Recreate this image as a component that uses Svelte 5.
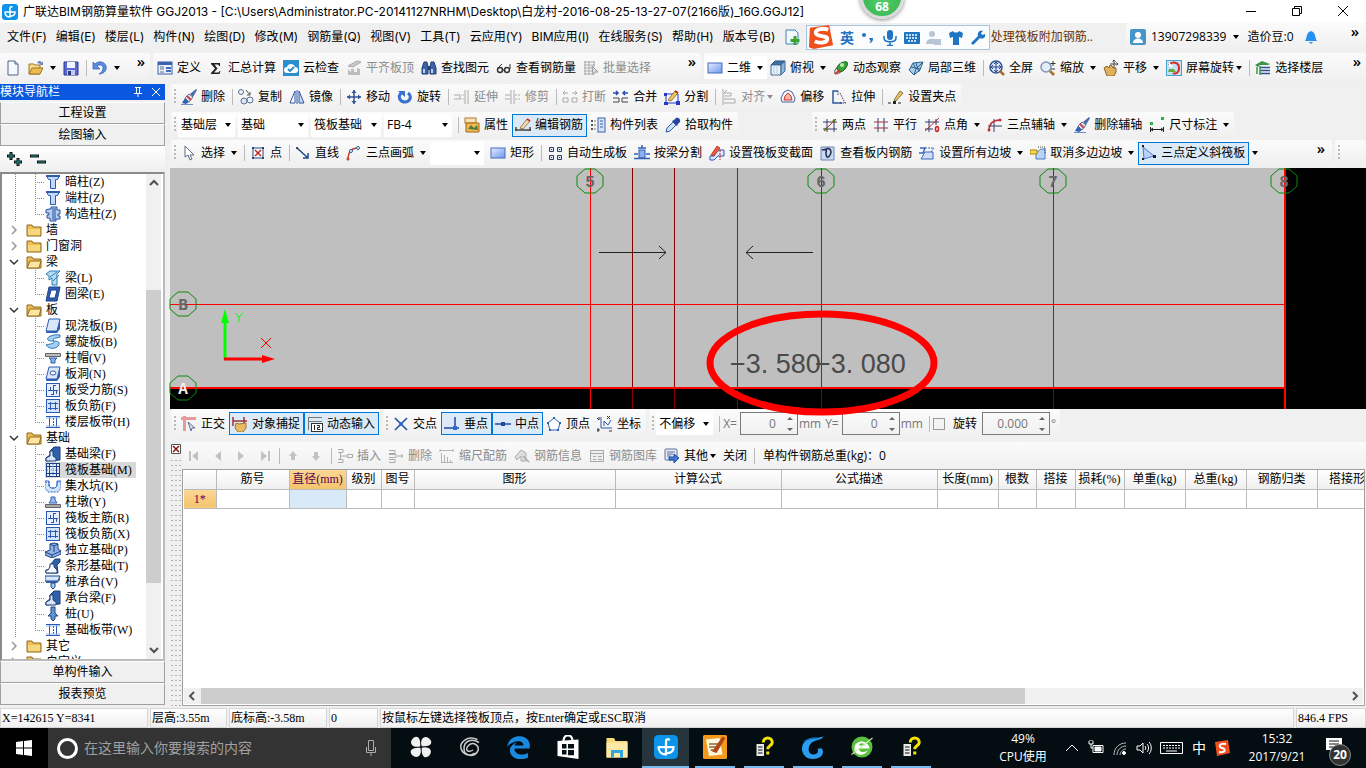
<!--
  GGJ2013 main window: menus, toolbars, component tree, drawing, rebar table
-->

<script>
  const menus = ['文件(F)', '编辑(E)', '楼层(L)', '构件(N)', '绘图(D)', '修改(M)', '钢筋量(Q)', '视图(V)', '工具(T)', '云应用(Y)', 'BIM应用(I)', '在线服务(S)', '帮助(H)', '版本号(B)'];

  const sep = { type: 'sep' };
  const grip = { type: 'grip' };
  const more = { type: 'more' };
  const b = (icon, label = '', opts = {}) => ({ type: 'btn', icon, label, ...opts });
  const combo = (value, width, name) => ({ type: 'combo', value, width, name });
  const off = { off: true };
  const on = { on: true };
  const drop = { drop: true };

  const fileBar = [b('doc', '', { title: '新建' }), b('open', '', { title: '打开', drop: true }), b('save', '', { title: '保存' }), sep, b('undo', '', { title: '撤销', drop: true }), more];
  const defBar = [b('form', '定义'), b('sigma', '汇总计算'), b('cloud', '云检查'), b('slab', '平齐板顶', off), b('find', '查找图元'), b('glasses', '查看钢筋量'), b('batch', '批量选择', off), more];
  const viewBar = [
    b('rect', '二维', { drop: true, white: true }), b('cube', '俯视', drop), b('orbit', '动态观察'), b('local3d', '局部三维'), sep,
    b('full', '全屏'), b('zoom', '缩放', drop), b('pan', '平移', drop), b('screen', '屏幕旋转', { small: true }), sep, b('floors', '选择楼层'), more
  ];

  const editBar = [
    grip, b('brush', '删除'), sep, b('copy', '复制'), b('mirror', '镜像'), sep, b('move', '移动'), b('rotate', '旋转'), sep,
    b('extend', '延伸', off), b('trim', '修剪', off), sep, b('cut', '打断', off), b('join', '合并'), b('split', '分割'), sep,
    b('align', '对齐', { off: true, small: true }), b('offset', '偏移'), b('stretch', '拉伸'), sep, b('gripset', '设置夹点')
  ];
  const partBar = [
    grip, combo('基础层', 57, '楼层'), combo('基础', 70, '构件类型'), combo('筏板基础', 70, '构件'), combo('FB-4', 68, '名称'), sep,
    b('props', '属性'), b('editbar', '编辑钢筋', on), b('list', '构件列表'), b('pick', '拾取构件')
  ];
  const axisBar = [
    grip, b('two', '两点'), b('parallel', '平行'), b('angle', '点角', drop), b('arcaxis', '三点辅轴', drop), b('brush', '删除辅轴'), b('dim', '尺寸标注', drop)
  ];
  const drawBar = [
    grip, b('arrow', '选择', drop), sep, b('point', '点'), sep, b('line', '直线'), b('arc', '三点画弧', drop), combo('', 54, '画弧方式'), b('rect', '矩形'), sep,
    b('auto', '自动生成板'), b('beamcut', '按梁分割'), b('section', '设置筏板变截面'), b('viewbar', '查看板内钢筋'), b('slope', '设置所有边坡', drop),
    b('unslope', '取消多边边坡', drop), b('tri', '三点定义斜筏板', { on: true }), { type: 'drop' }, more
  ];

  const snapBar1 = [grip, b('ortho', '正交'), b('osnap', '对象捕捉', on), b('dyn', '动态输入', on)];
  const snapBar2 = [grip, b('cross', '交点'), b('perp', '垂点', on), b('mid', '中点', on), b('vertex', '顶点'), b('coord', '坐标')];
  const rebarBar = [
    b('first', '', { off: true, title: '首行' }), b('prev', '', { off: true, title: '上一行' }), b('next', '', { off: true, title: '下一行' }), b('last', '', { off: true, title: '末行' }), sep,
    b('up', '', { off: true, title: '上移' }), b('down', '', { off: true, title: '下移' }), sep,
    b('insert', '插入', off), b('remove', '删除', off), b('scale', '缩尺配筋', off), b('info', '钢筋信息', off), b('lib', '钢筋图库', off),
    b('other', '其他', { small: true }), b('', '关闭'), sep
  ];

  const tree = [
    { icon: 'col', name: '暗柱', key: '(Z)' },
    { icon: 'col', name: '端柱', key: '(Z)' },
    { icon: 'gcol', name: '构造柱', key: '(Z)', last: true },
    { folder: 'closed', name: '墙' },
    { folder: 'closed', name: '门窗洞' },
    { folder: 'open', name: '梁' },
    { icon: 'beam', name: '梁', key: '(L)' },
    { icon: 'ring', name: '圈梁', key: '(E)', last: true },
    { folder: 'open', name: '板' },
    { icon: 'plate', name: '现浇板', key: '(B)' },
    { icon: 'spiral', name: '螺旋板', key: '(B)' },
    { icon: 'cap', name: '柱帽', key: '(V)' },
    { icon: 'hole', name: '板洞', key: '(N)' },
    { icon: 'grid1', name: '板受力筋', key: '(S)' },
    { icon: 'grid2', name: '板负筋', key: '(F)' },
    { icon: 'strip', name: '楼层板带', key: '(H)', last: true },
    { folder: 'open', name: '基础' },
    { icon: 'fbeam', name: '基础梁', key: '(F)' },
    { icon: 'raft', name: '筏板基础', key: '(M)', selected: true },
    { icon: 'pit', name: '集水坑', key: '(K)' },
    { icon: 'pier', name: '柱墩', key: '(Y)' },
    { icon: 'grid1', name: '筏板主筋', key: '(R)' },
    { icon: 'grid2', name: '筏板负筋', key: '(X)' },
    { icon: 'single', name: '独立基础', key: '(P)' },
    { icon: 'bar', name: '条形基础', key: '(T)' },
    { icon: 'pilecap', name: '桩承台', key: '(V)' },
    { icon: 'fbeam', name: '承台梁', key: '(F)' },
    { icon: 'pile', name: '桩', key: '(U)' },
    { icon: 'strip', name: '基础板带', key: '(W)', last: true },
    { folder: 'closed', name: '其它' },
    { folder: 'closed', name: '自定义' }
  ];

  const columns = [
    ['筋号', 73], ['直径(mm)', 57], ['级别', 35], ['图号', 33], ['图形', 201], ['计算公式', 166], ['公式描述', 156], ['长度(mm)', 61],
    ['根数', 38], ['搭接', 39], ['损耗(%)', 49], ['单重(kg)', 61], ['总重(kg)', 61], ['钢筋归类', 71], ['搭接形式', 72]
  ];

  const axes = [
    { n: '5', x: 420 }, { n: '6', x: 651 }, { n: '7', x: 883 }, { n: '8', x: 1114 }
  ];

  const apps = [
    { icon: 'pinwheel', name: '浏览器' },
    { icon: 'swirl', name: '助手' },
    { icon: 'edge', name: 'Edge' },
    { icon: 'store', name: '应用商店' },
    { icon: 'explorer', name: '文件资源管理器' },
    { icon: 'ggj', name: 'GGJ2013', active: true },
    { icon: 'note', name: '记事', open: true },
    { icon: 'help', name: '帮助', open: true },
    { icon: 'gblue', name: '广联达', open: true },
    { icon: 'egreen', name: '安全浏览器', open: true },
    { icon: 'help', name: '帮助', open: true }
  ];

  const brush = '<path d="M0 15.500h12" stroke="#6f8fc4"/><path d="M1 14l3-5 4 4-3 2z" fill="#2f62b5"/><path d="M4 9l4-4 4 3-4 5z" fill="#e4e6ef" stroke="#68708a"/><path d="M6 7l4 4" stroke="#c2455c" stroke-width="2"/><path d="M9 5l6-5 1 1-4 7z" fill="#4a6cae"/>';
  const folderBack = '<path d="M1 3h5l1 2h8v9H1z" fill="#eebf4e" stroke="#8f6a22"/>';

  // 16x16 drawings
  const icons = {
    doc: '<path d="M3 1h7l3 3v11H3z" fill="#f5f8fd" stroke="#50648c"/><path d="M10 1v3h3" fill="#c6d4ee" stroke="#50648c"/>',
    open: '<path d="M1 4h5l1 1h5v9H1z" fill="#f5dd8c" stroke="#9c7727"/><path d="M1 14l3-6h11l-3 6z" fill="#eebc4d" stroke="#9c7727"/><path d="M9 3c2-3 4-2 5 0l1-2v4h-4l2-1" fill="#6a85b5"/>',
    save: '<path d="M1 2h14v13H1z" fill="#5a6ad0" stroke="#2b378f"/><path d="M4 2h8v6H4z" fill="#f2f4ff"/><path d="M4 10h8v5H4z" fill="#c6cdec"/><path d="M5 11h3v4H5z" fill="#2b378f"/>',
    undo: '<path d="M1 2v7h7L5 6c3-2 6-1 6 2s-2 5-4 6c6 0 8-5 7-8-1-4-7-6-11-2z" fill="#5a8ce0" stroke="#2e5cae" stroke-width="0.700"/>',
    form: '<rect x="1" y="2" width="14" height="12" fill="#eaf1fb" stroke="#3a62ae"/><path d="M1 2h14v3H1z" fill="#3a62ae"/><path d="M3 7h4M3 9h4M3 12h4" stroke="#5f6f8e"/><path d="M9 7h5v2H9zM9 10h5v2H9z" fill="#3f6cc0"/>',
    sigma: '<path d="M3 3h9v3h-1c0-1-1-1.500-2-1.500H6.500L9.500 8.500 6 12.500h3.500c1 0 2-.5 2-1.500h1l-1 3H3v-1l4-4.500L3 4z" fill="#222"/>',
    cloud: '<rect width="16" height="16" fill="#2b8ed0"/><path d="M4 13a3 3 0 010-6c1-4 7-4 8 0a3 3 0 010 6z" fill="#fff"/><path d="M5 9l2 2 4-4" fill="none" stroke="#2b8ed0" stroke-width="2"/>',
    slab: '<path d="M2 6l9-5 4 1-8 5z" fill="#c9c9c9" stroke="#aaa"/><path d="M2 9v6h12V9l-3-1v4H8V9H5v3z" fill="#bdbdbd"/>',
    find: '<path d="M3 2h3l1 5v7H1V8zM10 2h3l2 6v6H9V7z" fill="#3d62a8" stroke="#22406f"/><path d="M7 6h2v4H7z" fill="#22406f"/><path d="M3 9v4M11 9v4" stroke="#b9cff2" stroke-width="2"/>',
    glasses: '<circle cx="4" cy="10" r="2.500" fill="none" stroke="#333" stroke-width="1.500"/><circle cx="11" cy="10" r="2.500" fill="none" stroke="#333" stroke-width="1.500"/><path d="M6 10h3M2 8l4-4M14 9V4" fill="none" stroke="#333"/>',
    batch: '<path d="M1 2h11M1 5h11M1 8h8M1 11h8M1 14h8M2 1v14M6 1v14M11 1v6" stroke="#aaa"/><path d="M9 6l6 6-3 0-2 3z" fill="#ddd" stroke="#999"/>',
    rect: '<defs><linearGradient id="rg" x1="0" y1="0" x2="1" y2="1"><stop offset="0" stop-color="#e5ecff"/><stop offset="1" stop-color="#6d97ee"/></linearGradient></defs><rect x="1" y="3" width="14" height="10" fill="url(#rg)" stroke="#466cc0"/>',
    cube: '<path d="M1 5l4-4h10l-4 4z" fill="#3c73a8" stroke="#24507a"/><path d="M1 5h10v10H1z" fill="#e8f1f9" stroke="#3f6b96"/><path d="M11 5l4-4v10l-4 4z" fill="#8fb4d5" stroke="#3f6b96"/><path d="M4 5v10M7 5v10" stroke="#b6cfe4"/>',
    orbit: '<ellipse cx="8" cy="8" rx="8" ry="3" transform="rotate(-40 8 8)" fill="none" stroke="#777"/><path d="M4 9c0-5 6-8 10-7 1 5-3 10-8 10z" fill="#39a33a" stroke="#176b20"/><path d="M2 14l5-4" stroke="#d33a2a" stroke-width="2"/><circle cx="9" cy="5" r="2" fill="#b6eeb0"/>',
    local3d: '<path d="M1 10l4-7 10-1-3 8-6 5z" fill="#a8cbe5" stroke="#2c6090"/><path d="M5 3l3 6-2 6M8 9l7-7M3 7l9 2M8 3l3 9" fill="none" stroke="#2c6090"/>',
    full: '<circle cx="7" cy="7" r="6" fill="#dfe9fa" stroke="#33528e" stroke-width="1.500"/><path d="M7 2v10M2 7h10M5 4l2-2 2 2M5 10l2 2 2-2M4 5L2 7l2 2M10 5l2 2-2 2" fill="none" stroke="#25488c"/><path d="M11 11l4 4" stroke="#a4712b" stroke-width="2.500"/>',
    zoom: '<circle cx="6" cy="7" r="5" fill="#e3edf8" stroke="#7f94b3" stroke-width="1.500"/><path d="M10 11l4 4" stroke="#a4712b" stroke-width="2.500"/><path d="M13 1v5M10.500 3.500h5M11 9h4" stroke="#333"/>',
    pan: '<path d="M1 8l3-2 2 2 1-3 2 1 1 2h3v4l-2 4H4z" fill="#e0b05c" stroke="#8a6526"/><path d="M11 0v8M7 4h8M9.500 1.500L11 0l1.500 1.500M13.500 2.500L15 4l-1.500 1.500" fill="none" stroke="#444"/>',
    screen: '<rect x="0.500" y="0.500" width="15" height="15" fill="#bfe3f4" stroke="#4aa3cf"/><path d="M3 5c3-4 10-3 10 3s-5 6-6 5" fill="none" stroke="#dc2a2a" stroke-width="2"/><path d="M3 9h5l2 3H2z" fill="#67a83b"/><path d="M3 2v5h4z" fill="#fff"/>',
    floors: '<path d="M0 5l7-4 8 3-2 1H5l-2 2z" fill="#3d9448"/><path d="M5 7.500h10M5 10.500h10M5 13.500h10" stroke="#2c4d96" stroke-width="1.500"/><path d="M5 6v9M2 7v7" fill="none" stroke="#3d9448" stroke-width="1.500"/>',
    brush,
    copy: '<circle cx="3" cy="3" r="2.500" fill="#eef3fb" stroke="#5b6c8c"/><circle cx="6" cy="12" r="3" fill="#dbe6f6" stroke="#5b6c8c"/><circle cx="12" cy="11" r="3" fill="#eef3fb" stroke="#5b6c8c"/><path d="M8 1l4 5M12 3v3H9" fill="none" stroke="#555"/>',
    mirror: '<path d="M6 2v12H1z" fill="#fff" stroke="#2f55a4"/><path d="M10 2v12h5z" fill="#c6d8f5" stroke="#2f55a4"/><path d="M8 1v14" stroke="#2f55a4"/>',
    move: '<path d="M8 1v14M1 8h14" stroke="#2f5597" stroke-width="1.500"/><path d="M5.500 4L8 1l2.500 3zM5.500 12L8 15l2.500-3zM4 5.500L1 8l3 2.500zM12 5.500L15 8l-3 2.500z" fill="#2f5597"/>',
    rotate: '<path d="M4 4c-4 5 0 9 4 9s8-5 3-9" fill="none" stroke="#3a70ce" stroke-width="3"/><path d="M1 2h7v6z" fill="#3a70ce"/>',
    extend: '<path d="M0 6h6v4H0M7 6h1M7 10h1M9 6h1M9 10h1M11 1v14M14 1v14" fill="none" stroke="#aaa"/>',
    trim: '<path d="M0 6h5M0 10h5M6 1v14M9 1v14M10 6h2M13 6h2M10 10h2M13 10h2" stroke="#aaa"/>',
    cut: '<path d="M1 4h5M3 2L1 4l2 2M15 4h-5M13 2l2 2-2 2M1 9h5v4H1zM10 9h5v4h-5z" fill="none" stroke="#aaa"/>',
    join: '<path d="M0 4h5M3 2l2 2-2 2M15 4h-5M12 2l-2 2 2 2" fill="none" stroke="#2850b0" stroke-width="1.500"/><path d="M0 9h6v4H0M15 9H9v4h6" fill="none" stroke="#444"/>',
    split: '<path d="M2 5h12v9H2z" fill="none" stroke="#2636c8"/><path d="M0 13h4v3H0zM12 12h4v4h-4zM0 4h3v3H0z" fill="#2636c8"/><path d="M4 11l7-9 3 2-7 8z" fill="#eec75e" stroke="#70501a" stroke-width="0.700"/><path d="M11 2l3 2" stroke="#b52a2a" stroke-width="2"/>',
    align: '<path d="M2 0v16M3 4h7v3H3M3 10h11v4H3" fill="none" stroke="#aaa"/><path d="M6 1L3 4" stroke="#aaa"/>',
    offset: '<path d="M8 1l4 2 3 6-1 4H2L1 9l3-6z" fill="#f4f6fb" stroke="#44659e"/><path d="M8 4l3 3 1 4H4l1-4z" fill="#f7b4a8" stroke="#d0342b"/>',
    stretch: '<path d="M7 2H2v12h9" fill="none" stroke="#2d59a4" stroke-width="1.500"/><path d="M7 2v4M9 4l5 10M9 14h6" stroke="#3b3b5e" stroke-dasharray="1.500 1"/>',
    gripset: '<path d="M0 14h14" stroke="#222" stroke-dasharray="3 2"/><rect x="5" y="12" width="3" height="3" fill="#222"/><path d="M6 11l6-9 3 2-7 8z" fill="#e9c463" stroke="#5c4317" stroke-width="0.700"/>',
    props: '<rect x="1" y="1" width="11" height="5" fill="#f6e4b8" stroke="#b27a24"/><path d="M2 6h13v9H2z" fill="#f3b850" stroke="#a0661b"/><path d="M4 12l3-4 3 3 3-3 1 5z" fill="#4d7d3b"/>',
    editbar: '<path d="M0 13h16M1 10v4M15 10v4" stroke="#444" stroke-width="1.500"/><path d="M5 11l7-9 3 2-7 8z" fill="#f1dfb2" stroke="#7d4a1c" stroke-width="0.700"/><path d="M12 2l3 2" stroke="#c0392b" stroke-width="2"/>',
    list: '<path d="M1 3h2v2H1zM1 7h2v2H1zM1 11h2v2H1z" fill="#555"/><path d="M4 4h2M4 8h2M4 12h2" stroke="#777"/><rect x="8" y="1" width="7" height="14" fill="#d8e5f9" stroke="#3d62a8"/><path d="M10 4h3M10 7h3M10 10h3" stroke="#3d62a8"/>',
    pick: '<path d="M1 15l1-4 6-6 3 3-6 6z" fill="#cde0fa" stroke="#2e5cae"/><path d="M7 4l5 5 1-2 2-2c1-3-2-5-4-4L9 3z" fill="#24469c"/>',
    two: '<path d="M5 2v13M12 2v13M1 5h14M1 12h14" stroke="#343c6e"/><path d="M2 14L14 2" stroke="#b82b2b"/><circle cx="4" cy="12" r="1.500" fill="#4b7d1f"/><circle cx="12" cy="4" r="1.500" fill="#4b7d1f"/>',
    parallel: '<path d="M5 1v14M11 1v14" stroke="#343c6e"/><path d="M1 5h14M1 11h14" stroke="#a03040"/>',
    angle: '<path d="M5 2v13M12 2v6M1 5h14M1 12h8" stroke="#343c6e"/><path d="M1 14L15 1" stroke="#b82b2b"/><ellipse cx="13" cy="12" rx="1.500" ry="2.500" fill="none" stroke="#c22" stroke-width="1.500"/>',
    arcaxis: '<path d="M7 2v13M1 9h14" stroke="#343c6e"/><path d="M2 14c0-7 4-11 11-11" fill="none" stroke="#c0313a" stroke-width="1.500"/><circle cx="13" cy="3" r="1.500" fill="#c0313a"/><circle cx="2" cy="13" r="1.500" fill="#c0313a"/>',
    dim: '<path d="M1 5h3v3H1zM12 0h3v3h-3z" fill="#35b13f"/><path d="M1.500 10v5M14.500 10v5M2 12.500h12M4 11l-2 1.500L4 14M12 11l2 1.500-2 1.500" fill="none" stroke="#222"/>',
    arrow: '<path d="M4 1v11l3-2 2 5 2-1-2-4h4z" fill="#fff" stroke="#5f6b80"/>',
    point: '<rect x="3" y="3" width="10" height="10" fill="#fff" stroke="#25467f"/><path d="M5 5l6 6M11 5l-6 6" stroke="#c22222" stroke-width="1.500"/><path d="M2 2h2v2H2zM12 2h2v2h-2zM2 12h2v2H2zM12 12h2v2h-2z" fill="#25467f"/>',
    line: '<path d="M2 3l11 10M13 8v5H8" fill="none" stroke="#1f4a8e" stroke-width="1.500"/><circle cx="2" cy="3" r="1" fill="#222"/>',
    arc: '<path d="M2 15C2 8 5 3 12 3" fill="none" stroke="#c2452d" stroke-width="1.500"/><circle cx="12" cy="3" r="1.500" fill="#fff" stroke="#2b5a9f"/><circle cx="5" cy="6" r="1.500" fill="#fff" stroke="#2b5a9f"/><circle cx="2" cy="14" r="1.500" fill="#c2452d"/>',
    auto: '<path d="M2.500 2.500h4v4h-4zM10.500 2.500h4v4h-4zM2.500 10.500h4v4h-4zM10.500 10.500h4v4h-4z" fill="#d9e4f5" stroke="#333f63"/><path d="M4 4h1v1H4zM12 4h1v1h-1zM4 12h1v1H4zM12 12h1v1h-1z" fill="#333f63"/>',
    beamcut: '<path d="M8 0v3M4 3h8" stroke="#345fb0" stroke-width="1.500"/><rect x="5" y="5" width="6" height="8" fill="#8bb0f0" stroke="#345fb0"/><path d="M0 9h4M0 13.500h16M16 9h-4" fill="none" stroke="#345fb0" stroke-width="1.500"/>',
    section: '<path d="M1 11h4l3-6h7v6H9l-4 4H1z" fill="#dfe9fa" stroke="#2f55b8"/><path d="M2 10l6-9 3 2-6 8z" fill="#ef5a3a" stroke="#9e2315" stroke-width="0.700"/><path d="M11 5v10" stroke="#c22" stroke-dasharray="2 1"/>',
    viewbar: '<path d="M1 2h13v13H1z" fill="#c9d9ef" stroke="#6c86b8"/><path d="M5 5c3-3 6-1 6 2s-3 6-4 5-2-7 1-9M2 5l5-1" fill="none" stroke="#222d50" stroke-width="1.500"/>',
    slope: '<path d="M1 3h5l-2 5H0" fill="none" stroke="#3966c0" stroke-width="1.500"/><path d="M2 14l4-7h8v7z" fill="#cfdff6" stroke="#3966c0"/><path d="M6 3h9l-3 4" fill="none" stroke="#3966c0" stroke-dasharray="2 1"/>',
    unslope: '<path d="M6 14V8l5-4h4v10z" fill="#bcd3f4" stroke="#5078c0"/><path d="M8 2h7v7" fill="none" stroke="#444" stroke-dasharray="1 1"/><path d="M0 5h7v4H0z" fill="#f5d94b" stroke="#a58313"/>',
    tri: '<path d="M2 2l11 9-10 3z" fill="#b9d0f7" stroke="#4a78d0"/><path d="M1 0h2v2H1zM12 10h3v3h-3zM1 13h2v2H1z" fill="#1c1c1c"/>',
    ortho: '<path d="M0 2.500h15M3.500 0v15" stroke="#e69a9a" stroke-width="3"/><path d="M7 6l7 6-3 0-1 3z" fill="#d8e0ee" stroke="#66738c"/>',
    osnap: '<path d="M1 1v9M1 5h14M12 1v6" stroke="#933" stroke-width="1.500"/><path d="M4 7l3 1 7-1v5l-3 4H6l-3-4z" fill="#e7ba63" stroke="#a37325"/>',
    dyn: '<path d="M1 1.500h14M1 5.500h14M1.500 1v13" stroke="#777"/><rect x="4.500" y="7.500" width="11" height="8" fill="#fff" stroke="#333"/><path d="M7.500 9v5M10 9.500h2.500v2H10.500v2h3" fill="none" stroke="#222"/>',
    cross: '<path d="M2 2l12 12M14 2L2 14" stroke="#1f4a9e" stroke-width="1.500"/><rect x="6" y="6" width="4" height="4" fill="#2f6ad0"/>',
    perp: '<path d="M0 12h15M11 1v11" stroke="#1f4a9e" stroke-width="1.500"/><rect x="9" y="10" width="4" height="4" fill="#2f6ad0"/>',
    mid: '<path d="M0 8h16" stroke="#1f4a9e" stroke-width="1.500"/><rect x="6" y="6" width="4" height="4" fill="#1f4a9e"/>',
    vertex: '<path d="M8 2l6 5-2 7H4L2 7z" fill="#fff" stroke="#2f5fae"/><path d="M7 1h2v2H7zM1 6h2v2H1zM13 6h2v2h-2zM3 13h2v2H3zM11 13h2v2h-2z" fill="#2f5fae"/>',
    coord: '<path d="M4 1v11M4 12h11M7 10V5l4 4 3-5" fill="none" stroke="#2a58ae"/><path d="M0 2l2 2M2 1v3M10 0l3 3M13 0l-3 3M0 13h2v2H0zM12 15h3" fill="none" stroke="#333"/>',
    first: '<path d="M2 3h2v10H2zM11 3v10L5 8z" fill="#c2c2c2"/>',
    prev: '<path d="M11 3v10L5 8z" fill="#c2c2c2"/>',
    next: '<path d="M5 3v10l6-5z" fill="#c2c2c2"/>',
    last: '<path d="M12 3h2v10h-2zM5 3v10l6-5z" fill="#c2c2c2"/>',
    up: '<path d="M8 3l4 5h-2v4H6V8H4z" fill="#c2c2c2"/>',
    down: '<path d="M8 13l4-5h-2V4H6v4H4z" fill="#c2c2c2"/>',
    insert: '<path d="M1 1.500h5v3H1M1 11.500h5v3H1M3.500 5v6M4 8h6M10.500 6.500h5v3h-5z" fill="none" stroke="#aaa"/>',
    remove: '<path d="M1 2.500h6v3H1M1 11.500h6v3H1M1 6.500h7v3H1" fill="none" stroke="#aaa"/><path d="M9 8h6M13 6l2 2-2 2" fill="none" stroke="#aaa"/>',
    scale: '<path d="M1 1v3M1 2.500h13M14 1v3M2.500 5v10M5.500 7v8M8.500 9v6M11.500 12v3M2 14.500h12" fill="none" stroke="#b4b4b4"/>',
    info: '<path d="M1 9l6-7 5 3v8H7V8l-4 4z" fill="#ddd" stroke="#aaa"/><path d="M9 8l6 6" stroke="#aaa" stroke-width="1.500"/>',
    lib: '<rect x="1.500" y="2.500" width="13" height="11" fill="#eee" stroke="#aaa"/><path d="M2 5.500h12M4 8.500h3M9 8.500h4M4 11.500h3M9 11.500h4" stroke="#aaa"/>',
    other: '<rect x="1" y="1" width="12" height="11" rx="1" fill="#e4ecf9" stroke="#5f6f92"/><path d="M3 4h8M3 6h6M3 8h4" stroke="#5f6f92"/><path d="M5 9h5V6l5 4-5 5v-3H5z" fill="#3f78d8" stroke="#214f9f"/>',
    col: '<path d="M1.500 1.500h13l-2 4h-2v9h-5v-9h-2z" fill="#c2d9f7" stroke="#2d5ca8"/><path d="M1 2h14" stroke="#2d5ca8" stroke-width="2"/>',
    gcol: '<path d="M4 3h2V1h6v3h3v4h-2v2h2v3h-4v2H5v-3H2V9h2V7H1V4z" fill="#b5cff2" stroke="#234f9d"/><path d="M8 2v12M10 2v12" stroke="#234f9d"/>',
    beam: '<path d="M1 4l4-3h10l-3 3v11H7V8L4 10V6z" fill="#b7dcf4" stroke="#2f7fb8"/><path d="M5 7l7-5M8 11l6-6" stroke="#2f7fb8"/>',
    ring: '<path d="M4 1h11l-3 14H1z" fill="#2d5fb4" stroke="#1c418a"/><path d="M6 4h6l-2 8H4z" fill="#fff" stroke="#1c418a"/>',
    plate: '<path d="M4 1h11v10l-3 4H1z" fill="#2d5fb4"/><path d="M4 1h11l-3 12H1z" fill="#dbe8fb" stroke="#2d5fb4"/>',
    spiral: '<path d="M15 1C8 0 1 3 3 6c2 2 6 0 6 2s-5 2-8 3c4 6 14 3 13-2-1-3-6-1-6-3s5-2 7-3z" fill="#a6d0f2" stroke="#2a74b8"/>',
    cap: '<path d="M.5 3.500h15v3H.5z" fill="#bbb" stroke="#666"/><path d="M4 8h8l-2 2v3H6v-3z" fill="#8bb2ee" stroke="#2d5ca8"/>',
    hole: '<path d="M4 1h11v10l-3 4H1z" fill="#2d5fb4"/><path d="M4 1h11l-3 12H1z" fill="#dbe8fb" stroke="#2d5fb4"/><ellipse cx="8" cy="7" rx="3" ry="2" fill="#fff" stroke="#2d5fb4"/>',
    grid1: '<rect x="1.500" y="1.500" width="13" height="13" fill="#e8effc" stroke="#2858b8"/><path d="M8.500 3v10M3 8.500h10M5.500 5v3M11.500 9v3M8 3.500h3M6 12.500h3" fill="none" stroke="#2858b8"/>',
    grid2: '<rect x="1.500" y="1.500" width="13" height="13" fill="#d5e2f9" stroke="#2858b8"/><path d="M3 5.500h10M3 10.500h10M5.500 4v8M10.500 4v8" fill="none" stroke="#2858b8"/>',
    strip: '<path d="M1 2.500h14M1 13.500h14" stroke="#2858b8"/><path d="M4.500 3v10M11.500 3v10" stroke="#2858b8"/><path d="M8.500 4v9" stroke="#2858b8" stroke-dasharray="2 1"/><path d="M1 4h14M1 12h14" stroke="#9ab6ea"/>',
    fbeam: '<path d="M1 15v-3l4-3V5l4-4h6v13z" fill="#2f62aa" stroke="#1d3f78"/><path d="M1 15v-3l4-2V5h3v5l3 2v3z" fill="#d8e6fa" stroke="#1d3f78"/>',
    raft: '<rect x="1.500" y="1.500" width="13" height="13" fill="#e3ecfb" stroke="#1d3f88"/><path d="M4.500 1v14M11.500 1v14M1 4.500h14M1 11.500h14" stroke="#1d3f88"/><path d="M8 2v12M2 8h12" stroke="#5a80d0" stroke-dasharray="1 1"/>',
    pit: '<path d="M0 4h4v4l2 2h4l2-2V4h4v6l-3 4H3l-3-4z" fill="#d3e4fa" stroke="#2f68c0" stroke-dasharray="2 1"/><path d="M0 3h4v5l2 2h4l2-2V3h4" fill="none" stroke="#2f68c0"/>',
    pier: '<path d="M6 3h4v3l2 3H4l2-3z" fill="#9dbdf0" stroke="#2f5fae"/><path d="M.5 10.500h15v3H.5z" fill="#aaa" stroke="#666"/>',
    single: '<path d="M0 10l5-2 0-6 4-1 4 1v5l3 2v3l-9 4-7-3z" fill="#8eb2e4" stroke="#1d4583"/><path d="M5 2l4 2v6M9 4l4-2M0 10l7 3 9-4M7 13v3" fill="none" stroke="#1d4583"/>',
    bar: '<path d="M1 15v-3h3l2-6 4-5h5v3l-3 3 1 8z" fill="#2f62aa" stroke="#1d3f78"/><path d="M1 15v-3h2l2-3V6h4v3l3 3v3z" fill="#fff" stroke="#1d3f78"/>',
    pilecap: '<path d="M0 2h15l-2 5H0z" fill="#d7e6fa" stroke="#1d4583"/><path d="M1 7h12l2-4v3l-3 3H1z" fill="#2f62aa"/><path d="M6 9h4v4l-2 2-2-2z" fill="#a9c8f2" stroke="#1d4583"/>',
    pile: '<path d="M6 1h4v6l3 3h-3v3l-2 2-2-2v-3H3l3-3z" fill="#5f93d0" stroke="#1d4583"/>',
    folder: folderBack + '<path d="M2 7h12v6H2z" fill="#f7d77e"/>',
    folderopen: folderBack + '<path d="M1 14l3-7h11l-2 7z" fill="#ffe6a0" stroke="#8f6a22"/>',
    ggj: '<rect width="16" height="16" rx="3" fill="#0b94ea"/><path d="M8 13V4c0-1 1-1.500 2-1M3 8h10c0 3-2 4-4 4M3 8c0 3 2 5 5 5" fill="none" stroke="#fff" stroke-width="1.500" stroke-linecap="round"/>',
    newdoc: '<path d="M2 1h9l3 3v11H2z" fill="#f2f8fd" stroke="#3b86bd"/><path d="M11 7v9M6.500 11.500h9" stroke="#36a332" stroke-width="3"/>',
    user: '<rect width="16" height="16" rx="2" fill="#4795c8"/><circle cx="8" cy="6" r="3" fill="#fff"/><path d="M3 14c0-6 10-6 10 0z" fill="#fff"/>',
    bell: '<path d="M2 12c2-2 1-9 6-10 5 1 4 8 6 10zM6 13h4l-2 2z" fill="#2490f0"/>',
    pinwheel: '<path d="M7.500 7.500C3 9 0 6 2 3s6-3 5.500 4.500zM8.500 7.500C7 3 10 0 13 2s3 6-4.500 5.500zM8.500 8.500C13 7 16 10 14 13s-6 3-5.500-4.500zM7.500 8.500C9 13 6 16 3 14S0 8 7.500 8.500z" fill="#f0f0f0"/>',
    swirl: '<path d="M13 3C6 0 1 5 2 9s8 7 11 2c2-4-3-7-6-4s0 5 3 3M14 5C9 2 4 4 4 9s5 5 7 3" fill="none" stroke="#ccc"/>',
    edge: '<path d="M0 8C1 2 6 0 10 1c4 1 6 4 5 8H5c0 4 5 5 9 3v3C8 18 1 15 2 9c1-2 3-4 5-4-2 1-2 2-2 2h6C11 3 4 3 0 8z" fill="#1989e0"/>',
    store: '<path d="M1 4l14-1v13L1 14z" fill="#fff"/><path d="M5 4c0-5 6-5 6 0" fill="none" stroke="#fff" stroke-width="1.500"/><path d="M4 6l3 0v3H4zM8 6h4v3H8zM4 10h3v3H4zM8 10h4v3.500H8z" fill="#071014"/>',
    explorer: '<path d="M1 2h5l1 2h8v11H1z" fill="#f8d775"/><path d="M1 5h14v10H1z" fill="#ffe9a6"/><path d="M4 15v-5h8v5h-2v-3H6v3z" fill="#32a5dc"/>',
    note: '<rect width="16" height="16" rx="1" fill="#f39a1d"/><path d="M2 3l9-1 2 11-9 1z" fill="#fff8df"/><path d="M4 6h6M4 8h6M5 10h5" stroke="#8b6a3d"/><path d="M6 11l7-10 2 1-6 10z" fill="#b34619"/>',
    help: '<path d="M3 6h5v8H3z" fill="#e9e9e9"/><path d="M4 8h3M4 10h3M4 12h3" stroke="#555"/><path d="M7.500 5c0-4 6-4 6 0 0 2-3 2-3 4.500M10.500 11v2" fill="none" stroke="#f5e400" stroke-width="2"/>',
    gblue: '<path d="M15 1c-1 2-3 2-6 3-5 2-5 9-1 9 3 0 4-2 3-4h3c2 4-1 7-6 7C1 16-1 9 2 5s8-2 13-4z" fill="#2a9df0"/><path d="M2 5c2-3 6-3 9-3" fill="none" stroke="#0d6fc0"/>',
    egreen: '<circle cx="8" cy="8" r="7" fill="#5bbf3f"/><path d="M3 8c1-5 9-5 10 1H6c0 3 4 3 6 1-2 5-10 4-9-2zM6 7h4c0-2-4-2-4 0z" fill="#fff"/><path d="M1 13L15 2" stroke="#c9f2ae" stroke-width="0.700"/>'
  };

  let searchText = $state('');
</script>

<svelte:head>
  <title>广联达BIM钢筋算量软件 GGJ2013</title>
</svelte:head>

{#snippet icon(name, big = false)}
  <svg class="icon" class:big viewBox="0 0 16 16" aria-hidden="true">{@html icons[name]}</svg>
{/snippet}

{#snippet bar(items)}
  {#each items as item}
    {#if item.type === 'sep'}
      <span class="sep"></span>
    {:else if item.type === 'grip'}
      <span class="grip"></span>
    {:else if item.type === 'more'}
      <button class="more" title="更多">»</button>
    {:else if item.type === 'drop'}
      <button class="dropdown" title="选项"><i class="caret"></i></button>
    {:else if item.type === 'combo'}
      <span class="combo" style:width="{item.width}px">
        <select aria-label={item.name}><option>{item.value}</option></select>
        <i class="caret"></i>
      </span>
    {:else}
      <button class="tool" class:on={item.on} class:white={item.white} disabled={item.off} title={item.title}>
        {#if item.icon}{@render icon(item.icon)}{/if}
        {#if item.label}<span>{item.label}</span>{/if}
        {#if item.drop}<i class="caret wide"></i>{/if}
        {#if item.small}<i class="caret tight"></i>{/if}
      </button>
    {/if}
  {/each}
{/snippet}

{#snippet spin(id, value)}
  <span class="spin">
    <input {id} type="text" {value} disabled />
    <svg viewBox="0 0 8 16" aria-hidden="true"><path d="M1 4l3-3 3 3zM1 12l3 3 3-3z" fill="#666" /></svg>
  </span>
{/snippet}

<div class="app">
  <header class="titlebar">
    {@render icon('ggj')}
    <h1>广联达BIM钢筋算量软件 GGJ2013 - [C:\Users\Administrator.PC-20141127NRHM\Desktop\白龙村-2016-08-25-13-27-07(2166版)_16G.GGJ12]</h1>
    <div class="window-buttons">
      <button title="最小化"><svg viewBox="0 0 10 10"><path d="M0 5.500h10" /></svg></button>
      <button title="还原"><svg viewBox="0 0 10 10"><path d="M.5 2.500h7v7h-7zM2.500 2.500v-2h7v7h-2" /></svg></button>
      <button title="关闭"><svg viewBox="0 0 10 10"><path d="M0 0l10 10M10 0L0 10" /></svg></button>
    </div>
    <div class="ball">68</div>
  </header>

  <nav class="menubar">
    <div class="panel menus">
      {#each menus as menu}
        <button>{menu}</button>
      {/each}
      {@render icon('newdoc')}
      <a class="tip" href="#tip">处理筏板附加钢筋..</a>
    </div>
    <div class="panel account">
      {@render icon('user')}
      <button>13907298339 <i class="caret"></i></button>
      <span>造价豆:0</span>
      {@render icon('bell')}
      <button class="more" title="更多">»</button>
    </div>
    <div class="ime">
      <svg class="sogou" viewBox="0 0 28 28" aria-hidden="true"><path d="M3 4l20-3 4 21-20 4-5-2z" fill="#f0501e" /><path d="M22 6c-5-2-13-1-13 3 0 5 13 2 12 7-1 4-9 4-13 2" fill="none" stroke="#fff" stroke-width="4" /></svg>
      <b>英</b>
      <svg viewBox="0 0 16 16"><circle cx="4" cy="5" r="2" /><path d="M9 8h4c0 3-1 5-4 5 2-1 2-2 1-3z" /></svg>
      <svg viewBox="0 0 16 16"><rect x="5" y="0" width="6" height="10" rx="3" /><path d="M2 6v2c0 5 12 5 12 0V6M8 12v3M5 15.500h6" fill="none" stroke="#2074c4" stroke-width="1.500" /></svg>
      <svg viewBox="0 0 16 16"><rect y="2" width="16" height="12" rx="1" /><path d="M2 5h12M2 8h12M4 11h8" stroke="#fff" stroke-width="1.500" stroke-dasharray="2 1" /></svg>
      <svg class="dim" viewBox="0 0 16 16"><circle cx="6" cy="4" r="3" /><path d="M0 14c0-7 12-7 12 0z" /><path d="M8 9h7v6H8z" /></svg>
      <svg viewBox="0 0 16 16"><path d="M1 3l4-2c1 2 5 2 6 0l4 2-1 5-3-1v8H5V7L2 8z" /></svg>
      <svg viewBox="0 0 16 16"><path d="M1 13l7-7c-1-4 2-6 5-5l-2 2 1 2 3-1c1 3-2 6-5 4l-7 7z" /></svg>
    </div>
  </nav>

  <div class="row">
    <div class="panel file">{@render bar(fileBar)}</div>
    <div class="panel def">{@render bar(defBar)}</div>
    <div class="panel view">{@render bar(viewBar)}</div>
  </div>

  <div class="workspace">
    <aside>
      <h2>
        模块导航栏
        <button title="固定"><svg viewBox="0 0 10 10"><path d="M2 .5h6M3.500 1v5M6.500 1v5M1 6.500h8M5 7v3" /></svg></button>
        <button title="关闭"><svg viewBox="0 0 10 10"><path d="M1 1l8 8M9 1L1 9" /></svg></button>
      </h2>
      <button class="section">工程设置</button>
      <button class="section">绘图输入</button>
      <div class="tree-tools">
        <button title="全部展开"><svg viewBox="0 0 18 16"><path d="M5 1v8M1 5h8M12 7v8M8 11h8" stroke="#111" stroke-width="3" /><path d="M5 2v6M2 5h6M12 8v6M9 11h6" stroke="#159a8c" /></svg></button>
        <button title="全部折叠"><svg viewBox="0 0 18 16"><path d="M1 5h9M8 11h9" stroke="#111" stroke-width="3" /><path d="M2 5h7M9 11h7" stroke="#159a8c" /></svg></button>
      </div>
      <div class="tree-box">
        <ul>
          {#each tree as node}
            {#if node.folder}
              <li class="folder">
                <svg class="fold" class:open={node.folder === 'open'} viewBox="0 0 10 10"><path d="M3 1l4 4-4 4" /></svg>
                {@render icon(node.folder === 'open' ? 'folderopen' : 'folder')}
                <span class="label">{node.name}</span>
              </li>
            {:else}
              <li>
                <span class="trunk"></span>
                <span class="branch" class:last={node.last}></span>
                <span class="leaf" class:selected={node.selected}>
                  {@render icon(node.icon)}
                  <span class="label">{node.name}{node.key}</span>
                </span>
              </li>
            {/if}
          {/each}
        </ul>
        <div class="vscroll">
          <svg viewBox="0 0 10 10"><path d="M1 7l4-4 4 4" /></svg>
          <span></span>
          <svg viewBox="0 0 10 10"><path d="M1 3l4 4 4-4" /></svg>
        </div>
      </div>
      <button class="section">单构件输入</button>
      <button class="section">报表预览</button>
    </aside>

    <main>
      <div class="row"><div class="panel">{@render bar(editBar)}</div></div>
      <div class="row split">
        <div class="panel">{@render bar(partBar)}</div>
        <div class="panel axis">{@render bar(axisBar)}</div>
      </div>
      <div class="row">
        <div class="panel draw">{@render bar(drawBar)}</div>
        <div class="panel rest"><span class="grip"></span></div>
      </div>

      <svg class="drawing" role="img" aria-label="筏板基础平面">
        <rect width="100%" height="241" fill="#000" />
        <rect width="1114" height="220" fill="#bfbfbf" />
        <path d="M462.500 0v241M504.500 0v241" stroke="#8c0000" />
        <path d="M567.500 220v21M651.500 220v21M883.500 220v21" stroke="#8c0000" />
        <path d="M567.500 0v220M651.500 0v220M883.500 0v220" stroke="#404040" />
        <path d="M420.500 0v241M0 136.500h1114" stroke="#f00" />
        <path d="M0 220h1115V0M1115 220v21" fill="none" stroke="#f00" stroke-width="2" />
        {#each axes as a}
          <path d="M{a.x - 5} 1h10l8 7v10l-8 7h-10l-8-7V8z" class="bubble" />
          <text x={a.x} y="19" class="axis-name">{a.n}</text>
        {/each}
        <path d="M8 124h10l8 7v10l-8 7H8l-8-7v-10z" class="bubble" />
        <text x="13" y="142" class="axis-name">B</text>
        <path d="M8 208h10l8 7v10l-8 7H8l-8-7v-10z" class="bubble" />
        <text x="13" y="226" class="axis-name light">A</text>
        <path d="M429 84.500h67M489 78l7 6.500-7 6.500M643 84.500h-67M583 78l-7 6.500 7 6.500" fill="none" stroke="#222" />
        <path d="M55 192v-40" stroke="#0f0" stroke-width="3" />
        <path d="M51 155l4-14 4 14z" fill="#0f0" />
        <path d="M54 191h40" stroke="#f00" stroke-width="3" />
        <path d="M92 187l13 4-13 4z" fill="#f00" />
        <path d="M65 145l4 4 4-4M69 149v5" fill="none" stroke="#0f0" />
        <path d="M91 170l10 10M101 170l-10 10" stroke="#f00" />
        <text x="560" y="205" class="level">−3. 580</text>
        <text x="645" y="205" class="level">−3. 080</text>
        <ellipse cx="652" cy="195" rx="112" ry="49" fill="none" stroke="#f00" stroke-width="7" />
      </svg>

      <div class="row snap">
        <div class="panel">{@render bar(snapBar1)}</div>
        <div class="panel">{@render bar(snapBar2)}</div>
        <div class="panel inputs">
          {@render bar([grip, combo('不偏移', 57, '偏移方式'), sep])}
          <label for="dx">X=</label>{@render spin('dx', '0')}<span class="unit">mm</span>
          <label for="dy">Y=</label>{@render spin('dy', '0')}<span class="unit">mm</span>
          <i class="sep"></i>
          <input type="checkbox" id="rot" /><label class="dark" for="rot">旋转</label>
          <div class="angle">{@render spin('deg', '0.000')}</div><span class="unit">°</span>
        </div>
      </div>

      <section class="rebar">
        <div class="rail"><button title="关闭"><svg viewBox="0 0 10 10"><path d="M.5.5h9v9h-9z" fill="#fff" stroke="#555" /><path d="M2 2l6 6M8 2L2 8" stroke="#811" stroke-width="1.500" /></svg></button></div>
        <div class="rebar-body">
          <div class="rebar-tools">{@render bar(rebarBar)}<span class="total">单构件钢筋总重(kg)：0</span></div>
          <div class="table-box">
            <table>
              <colgroup>
                <col style:width="32px" />
                {#each columns as c}<col style:width="{c[1]}px" />{/each}
              </colgroup>
              <thead>
                <tr>
                  <th></th>
                  {#each columns as c, i}<th class:current={i === 1}>{c[0]}</th>{/each}
                </tr>
              </thead>
              <tbody>
                <tr>
                  <th class="current">1*</th>
                  {#each columns as c, i}<td class:active={i === 1}></td>{/each}
                </tr>
              </tbody>
            </table>
            <div class="hscroll">
              <svg viewBox="0 0 10 10"><path d="M7 1L3 5l4 4" /></svg>
              <div><span></span></div>
              <svg viewBox="0 0 10 10"><path d="M3 1l4 4-4 4" /></svg>
            </div>
          </div>
        </div>
      </section>
    </main>
  </div>

  <footer class="status">
    <span class="pos">X=142615 Y=8341</span>
    <span class="height">层高:3.55m</span>
    <span class="base">底标高:-3.58m</span>
    <span class="zero">0</span>
    <span class="hint">按鼠标左键选择筏板顶点，按Enter确定或ESC取消</span>
    <span class="fps">846.4 FPS</span>
  </footer>

  <div class="taskbar">
    <button class="start" title="开始"><svg viewBox="0 0 16 16"><path d="M0 2l7-1v6.500H0zM8 1l8-1v7.500H8zM0 8.500h7V15l-7-1zM8 8.500h8V16l-8-1z" fill="#fff" /></svg></button>
    <label class="search">
      <i></i>
      <input type="text" placeholder="在这里输入你要搜索的内容" bind:value={searchText} />
      <svg viewBox="0 0 16 16"><path d="M5.500.5h5v10h-5zM3.500 7v5.500h9V7M8 13v3" fill="none" stroke="#aaa" /></svg>
    </label>
    <div class="apps">
      {#each apps as app}
        <button class:active={app.active} class:open={app.open} title={app.name}>{@render icon(app.icon, true)}</button>
      {/each}
    </div>
    <div class="cpu">49%<br />CPU使用</div>
    <div class="tray">
      <svg viewBox="0 0 16 16"><path d="M2 11l6-6 6 6" /></svg>
      <svg viewBox="0 0 16 16"><path d="M5 5.500h10v7H5zM1 1v3h4V1M3 4v4h2M2 0v1M4 0v1" /><path d="M7 7h6v4H7z" fill="#fff" /></svg>
      <svg viewBox="0 0 16 16"><path d="M2 15C2 8 7 3 14 3M5 15c0-5 4-9 9-9M8 15c0-3 3-6 6-6" stroke="#bbb" /><circle cx="12" cy="13" r="1.500" fill="#fff" /></svg>
      <svg viewBox="0 0 16 16"><path d="M1 6h3l3-3v10l-3-3H1zM9 6c1 1 1 3 0 4M11 4c2 2 2 6 0 8M13 2c3 3 3 9 0 12" /></svg>
      <svg class="keys" viewBox="0 0 24 16"><path d="M.5 2.500h22v11H.5z" /><path d="M3 5.500h18M3 8h18" stroke-dasharray="2 1" /><path d="M6 11h11" /></svg>
      <span>中</span>
      <svg viewBox="0 0 16 16"><path d="M1 2l13-2 2 13-13 3z" fill="#f0501e" stroke="none" /><path d="M12 4C5 3 4 7 8 8s4 5-3 4" stroke-width="2" /></svg>
    </div>
    <div class="clock">15:32<br />2017/9/21</div>
    <button class="notice" title="通知">
      <svg viewBox="0 0 16 16"><path d="M0 0h16v12H8l-4 4v-4H0z" fill="#fff" /><path d="M3 3h10M3 6h10M3 9h7" stroke="#111" /></svg>
      <b>20</b>
    </button>
  </div>
</div>

<style>
:global(body) {
  background: #f0f0f0;
}

.app {
  min-height: 100vh;
  display: flex;
  flex-direction: column;
  overflow: hidden;
  background: #f0f0f0;
  color: #000;
  font-family: "Open Sans", "Noto Sans CJK SC", sans-serif;
  font-size: 12px;
  line-height: 16px;
}

button, input, select {
  margin: 0;
  padding: 0;
  border: none;
  background: none;
  color: inherit;
  font: inherit;
}

.icon {
  width: 16px;
  height: 16px;
  flex: none;
}

.icon.big {
  width: 24px;
  height: 24px;
}

.titlebar {
  position: relative;
  height: 23px;
  display: flex;
  align-items: center;
  padding-left: 2px;
  background: #fff;
}

.titlebar h1 {
  margin: 0 0 0 5px;
  font-family: Inter, "Noto Sans CJK SC", sans-serif;
  font-size: 12px;
  font-weight: normal;
  white-space: nowrap;
}

.window-buttons {
  margin-left: auto;
  display: flex;
}

.window-buttons button {
  width: 46px;
  height: 20px;
}

.window-buttons svg {
  width: 10px;
  height: 10px;
  fill: none;
  stroke: #000;
}

.ball {
  position: absolute;
  z-index: 3;
  left: 860px;
  top: -25px;
  width: 38px;
  height: 35px;
  display: flex;
  align-items: flex-end;
  justify-content: center;
  padding-bottom: 3px;
  border: 3px solid #dadada;
  border-radius: 50%;
  background: radial-gradient(circle at 50% 60%, #50cf68, #32ac4a);
  box-shadow: 0 1px 4px #888;
  color: #fff;
  font-weight: bold;
  line-height: 12px;
}

.panel {
  display: flex;
  align-items: center;
  padding-right: 1px;
  border-radius: 3px;
  background: linear-gradient(#fbfbfb, #f4f4f4 60%, #efefef);
  white-space: nowrap;
}

.menubar {
  position: relative;
  height: 28px;
  display: flex;
  gap: 2px;
  margin-bottom: 2px;
}

.menus {
  width: 1124px;
  gap: 9px;
  padding-left: 7px;
  box-sizing: border-box;
  background: #f0f0f0;
}

.menus button {
  font-family: Inter, "Noto Sans CJK SC", sans-serif;
}

.tip {
  margin-left: auto;
  padding-right: 30px;
  color: #6b3200;
  text-decoration: none;
}

.account {
  flex: 1;
  padding-left: 4px;
  gap: 5px;
}

.account button {
  display: flex;
  align-items: center;
  gap: 7px;
}

.account span {
  margin: 0 4px 0 3px;
}

.ime {
  position: absolute;
  left: 806px;
  top: 2px;
  width: 184px;
  height: 25px;
  box-sizing: border-box;
  display: flex;
  align-items: center;
  gap: 6px;
  border: 1px solid #a9c4de;
  background: #fafcfe;
}

.ime svg {
  width: 16px;
  height: 16px;
  flex: none;
  fill: #2074c4;
}

.ime .sogou {
  width: 27px;
  height: 27px;
}

.ime b {
  color: #2074c4;
  font-size: 14px;
}

.ime .dim {
  fill: #b8c5d4;
}

.row {
  display: flex;
  gap: 3px;
  height: 26px;
  margin-bottom: 2px;
}

.app > .row {
  height: 29px;
}

.file {
  width: 147px;
  padding-left: 2px;
}

.def {
  width: 546px;
  padding-left: 1px;
}

.view {
  flex: 1;
}

.tool {
  height: 23px;
  flex: none;
  display: flex;
  align-items: center;
  padding: 0 4px 0 3px;
}

.tool span {
  margin-left: 4px;
}

.tool > span:first-child {
  margin-left: 0;
}

.tool:disabled {
  color: #8c8c8c;
}

.tool.on {
  padding: 0 3px 0 2px;
  border: 1px solid #0078d7;
  background: #dbeaf6;
}

.tool.white {
  background: #fff;
}

.caret {
  flex: none;
  width: 0;
  border: solid transparent;
  border-width: 4px 3px 0;
  border-top-color: currentColor;
}

.caret.wide {
  margin-left: 6px;
}

.caret.tight {
  margin-left: 2px;
}

.dropdown {
  height: 23px;
  display: flex;
  align-items: center;
  padding: 0 3px;
}

.sep {
  width: 1px;
  height: 16px;
  flex: none;
  margin: 0 2px 0 3px;
  background: #bbb;
}

.grip {
  width: 2px;
  height: 16px;
  flex: none;
  margin: 0 2px 0 3px;
  background: repeating-linear-gradient(#bbb 0 2px, transparent 2px 4px);
}

.more {
  align-self: flex-start;
  margin-left: auto;
  padding-right: 4px;
  font-size: 15px;
  font-weight: 600;
}

.combo {
  height: 23px;
  flex: none;
  display: flex;
  align-items: center;
  margin-right: 3px;
  background: #fff;
}

.combo select {
  appearance: none;
  flex: 1;
  min-width: 0;
  padding-left: 3px;
}

.combo .caret {
  margin-right: 4px;
}

.workspace {
  flex: 1;
  display: flex;
}

aside {
  width: 165px;
  flex: none;
  margin-right: 5px;
  padding-bottom: 3px;
  display: flex;
  flex-direction: column;
}

aside h2 {
  display: flex;
  gap: 8px;
  height: 16px;
  margin: 0 0 2px;
  padding-right: 4px;
  align-items: center;
  background: #0a57e0;
  color: #fff;
  font-size: 12px;
  font-weight: normal;
}

aside h2 button:first-of-type {
  margin-left: auto;
}

aside h2 svg {
  display: block;
  width: 10px;
  height: 10px;
  fill: none;
  stroke: #fff;
}

.section {
  height: 22px;
  border: 1px solid #a0a0a0;
  border-top-color: #fff;
  background: #f0f0f0;
}

.tree-tools {
  display: flex;
  gap: 5px;
  height: 26px;
  align-items: center;
  padding-left: 6px;
  background: linear-gradient(#fff, #efefef);
}

.tree-tools svg {
  display: block;
  width: 18px;
  height: 16px;
}

.tree-box {
  flex: 1;
  display: flex;
  min-height: 480px;
  padding-right: 2px;
  border: 2px solid #8a8a8a;
  border-right-color: #bbb;
  border-bottom-color: #bbb;
  background: #fff;
  font-family: "Liberation Serif", "Noto Sans CJK SC", serif;
}

.tree-box ul {
  flex: 1;
  height: 485px;
  overflow: hidden;
  margin: 0;
  padding: 0 0 0 6px;
  box-sizing: border-box;
  list-style: none;
}

.tree-box li {
  display: flex;
  height: 16px;
  align-items: center;
  white-space: nowrap;
}

.tree-box li:not(.folder) {
  padding-left: 7px;
}

.fold {
  width: 10px;
  height: 10px;
  margin: 0 7px 0 1px;
  fill: none;
  stroke: #999;
  stroke-width: 1.5;
}

.fold.open {
  stroke: #333;
  transform: rotate(90deg);
}

.label {
  margin-left: 4px;
}

.trunk {
  width: 20px;
  height: 16px;
  background: repeating-linear-gradient(#888 0 1px, transparent 1px 2px) 0 0 / 1px 100% no-repeat;
}

.branch {
  width: 10px;
  height: 16px;
  background:
    repeating-linear-gradient(#888 0 1px, transparent 1px 2px) 0 0 / 1px 100% no-repeat,
    repeating-linear-gradient(90deg, #888 0 1px, transparent 1px 2px) 0 8px / 100% 1px no-repeat;
}

.branch.last {
  background-size: 1px 8px, 100% 1px;
}

.leaf {
  display: flex;
  align-items: center;
  padding-right: 4px;
}

.leaf.selected {
  background: #d9d9d9;
}

.vscroll {
  width: 15px;
  display: flex;
  flex-direction: column;
  align-items: center;
  padding: 4px 0;
  box-sizing: border-box;
  background: #f0f0f0;
}

.vscroll svg, .hscroll svg {
  width: 10px;
  height: 10px;
  flex: none;
  fill: none;
  stroke: #505050;
  stroke-width: 2;
}

.vscroll span {
  width: 100%;
  height: 293px;
  margin: auto 0 62px;
  background: #cdcdcd;
}

main {
  flex: 1;
  min-width: 0;
  display: flex;
  flex-direction: column;
}

main > .row {
  padding-left: 1px;
}

main > .split {
  gap: 74px;
}

.draw {
  width: 1160px;
}

.draw .more, .account .more {
  margin-right: 2px;
}

.rest {
  width: 30px;
}

.drawing {
  position: relative;
  display: block;
  width: 100%;
  height: 241px;
  overflow: visible;
  pointer-events: none;
}

.bubble {
  fill: none;
  stroke: #0a8a0a;
}

.axis-name {
  fill: #666;
  font-family: "Liberation Mono", monospace;
  font-size: 16px;
  font-weight: bold;
  text-anchor: middle;
}

.axis-name.light {
  fill: #eee;
}

.level {
  fill: #4a4a4a;
  font-family: "Liberation Sans", sans-serif;
  font-size: 27px;
  white-space: pre;
}

main > .snap {
  height: 29px;
  margin-bottom: 4px;
}

.inputs {
  color: #777;
}

.inputs .combo {
  color: #000;
}

.inputs > label {
  padding: 0 3px 0 1px;
}

.inputs > .dark {
  padding: 0 5px 0 8px;
  color: #000;
}

.unit {
  margin: 0 3px 0 1px;
}

.inputs input[type="checkbox"] {
  appearance: none;
  width: 12px;
  height: 12px;
  margin-left: 1px;
  border: 1px solid #999;
  background: #f4f4f4;
}

.spin {
  width: 58px;
  height: 23px;
  box-sizing: border-box;
  display: flex;
  align-items: center;
  padding-right: 3px;
  border: 1px solid #7a7a7a;
}

.spin input {
  flex: 1;
  width: 0;
  padding-right: 10px;
  color: #777;
  text-align: right;
}

.spin svg {
  width: 8px;
  height: 16px;
}

.angle .spin {
  width: 68px;
}

.rebar {
  flex: 1;
  display: flex;
}

.rail {
  width: 12px;
  box-sizing: border-box;
  padding-left: 1px;
  background: radial-gradient(circle, #b5b5b5 1px, transparent 1px) 0 16px / 4px 5px;
}

.rail button {
  display: block;
  height: 16px;
  background: #f0f0f0;
}

.rail svg {
  width: 10px;
  height: 10px;
}

.rebar-body {
  flex: 1;
  min-width: 0;
  display: flex;
  flex-direction: column;
}

.rebar-tools {
  height: 27px;
  display: flex;
  align-items: center;
  padding-left: 2px;
  background: linear-gradient(#fbfbfb, #f0f0f0);
  white-space: nowrap;
}

.total {
  margin-left: 6px;
}

.table-box {
  flex: 1;
  display: flex;
  flex-direction: column;
  overflow: hidden;
  margin: 0 1px 2px 0;
  padding: 0 1px 1px;
  border: 1px solid #a0a0a0;
  background: #fff;
}

table {
  width: 1205px;
  table-layout: fixed;
  border-collapse: collapse;
  font-family: "Liberation Serif", "Noto Sans CJK SC", serif;
}

th, td {
  box-sizing: border-box;
  height: 19px;
  padding: 0;
  border: 1px solid #bbb;
  border-width: 0 1px 1px 0;
  font-weight: normal;
  white-space: nowrap;
  overflow: hidden;
}

thead th {
  background: linear-gradient(#fff, #efefef);
}

th.current {
  background: linear-gradient(#fbd795, #f4c46c);
  color: #5c0050;
}

td.active {
  border-left: 1px solid #000;
  background: #d8e9f8;
}

.hscroll {
  height: 16px;
  margin-top: auto;
  display: flex;
  align-items: center;
  padding: 0 3px;
  background: #f0f0f0;
}

.hscroll div {
  flex: 1;
  height: 16px;
  margin: 0 4px;
}

.hscroll div span {
  display: block;
  width: 72%;
  height: 16px;
  background: #cdcdcd;
}

.status {
  display: flex;
  gap: 2px;
  height: 20px;
  font-family: "Liberation Serif", "Noto Sans CJK SC", serif;
  white-space: nowrap;
}

.status span {
  box-sizing: border-box;
  padding: 0 1px;
  border: 1px solid #d5d5d5;
  background: linear-gradient(#fff, #f0f0f0);
  line-height: 18px;
}

.status .pos {
  width: 148px;
}

.status .height {
  width: 77px;
}

.status .base {
  width: 98px;
}

.status .zero {
  width: 49px;
}

.status .hint {
  flex: 1;
}

.status .fps {
  width: 70px;
}

.taskbar {
  display: flex;
  height: 40px;
  background: #040d11;
  color: #fff;
}

.start {
  width: 48px;
  background: #000;
}

.start svg {
  width: 16px;
  height: 16px;
  vertical-align: middle;
}

.search {
  width: 343px;
  box-sizing: border-box;
  display: flex;
  align-items: center;
  gap: 6px;
  padding: 0 12px 0 9px;
  background: #333;
}

.search i {
  width: 15px;
  height: 15px;
  border: 3px solid #fff;
  border-radius: 50%;
}

.search input {
  flex: 1;
  font-size: 14px;
}

.search input::placeholder {
  color: #a0a0a0;
}

.search svg {
  width: 16px;
  height: 16px;
}

.apps {
  display: flex;
  gap: 2px;
  padding-left: 6px;
}

.apps button {
  width: 47px;
  display: flex;
  align-items: center;
  justify-content: center;
  border-bottom: 2px solid transparent;
}

.apps .active {
  border-color: #76b9ed;
  background: #26353b;
}

.apps .open {
  background: linear-gradient(#76b9ed, #76b9ed) center bottom / 40px 2px no-repeat border-box;
}

.cpu, .clock {
  line-height: 18px;
  padding-top: 2px;
  text-align: center;
}

.cpu {
  width: 60px;
  margin-left: auto;
}

.tray {
  display: flex;
  align-items: center;
  gap: 8px;
  margin: 0 17px 0 11px;
}

.tray svg {
  width: 16px;
  height: 16px;
  fill: none;
  stroke: #fff;
}

.tray .keys {
  width: 24px;
}

.tray span {
  font-size: 14px;
}

.clock {
  width: 60px;
}

.notice {
  position: relative;
  width: 59px;
  padding-right: 6px;
}

.notice svg {
  width: 16px;
  height: 16px;
}

.notice b {
  position: absolute;
  left: 22px;
  top: 16px;
  width: 20px;
  height: 20px;
  border: 1px solid #888;
  border-radius: 50%;
  background: #333;
  line-height: 20px;
}
</style>
